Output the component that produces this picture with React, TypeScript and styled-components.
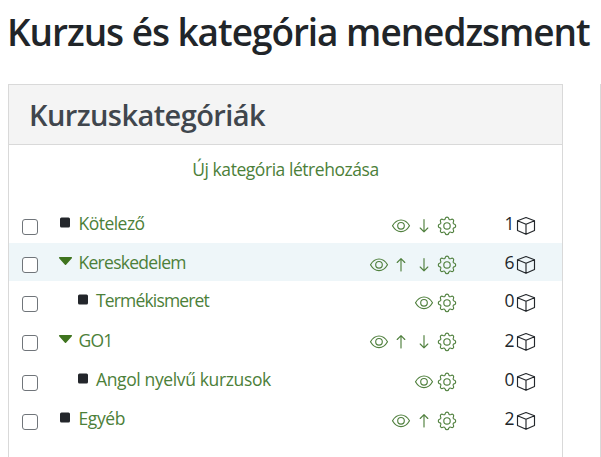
import React from 'react';
import styled, { createGlobalStyle } from 'styled-components';

const Global = createGlobalStyle`
  * { box-sizing: border-box; }
  html, body { margin: 0; background: #fff; overflow: hidden; }
  body { font-family: "Open Sans", "Noto Sans", sans-serif; font-size: 17.5px; font-weight: 400; color: #23272b; }
`;

const Page = styled.main`
  height: 457px;
  overflow: hidden;
`;

const Title = styled.h1`
  margin: 0;
  height: 84px;
  padding: 3px 0 0 7px;
  font-size: 37px;
  line-height: 58px;
  font-weight: 600;
  letter-spacing: -1.04px;
  color: #212529;
  white-space: nowrap;
`;

const Columns = styled.div`
  display: flex;
  gap: 37px;
  height: 373px;
  padding-left: 8px;
`;

const Panel = styled.section`
  flex: none;
  width: 555px;
  border: 1px solid #d9d9d9;
  border-bottom: 0;
`;

const PanelHeading = styled.h2`
  margin: 0;
  height: 60px;
  padding: 0 0 0 20px;
  background: #f4f4f4;
  border-bottom: 1px solid #d9d9d9;
  font-size: 29px;
  line-height: 60px;
  font-weight: 600;
  letter-spacing: -0.58px;
  color: #40464d;
`;

const CreateBar = styled.div`
  display: flex;
  justify-content: center;
  height: 59px;
  line-height: 49px;
`;

const Link = styled.a<{ $spacing: number }>`
  color: #4c8039;
  letter-spacing: ${(p) => p.$spacing}px;
  white-space: nowrap;
`;

const List = styled.ul`
  list-style: none;
  margin: 0;
  padding: 0;
`;

const Row = styled.li<{ $height: number; $active?: boolean }>`
  display: flex;
  align-items: flex-start;
  height: ${(p) => p.$height}px;
  padding-left: 13px;
  background: ${(p) => (p.$active ? '#eef6f9' : 'transparent')};
`;

const Check = styled.input<{ $top: number }>`
  appearance: none;
  flex: none;
  width: 16px;
  height: 16px;
  margin: ${(p) => p.$top}px 0 0;
  border: 1px solid #70757a;
  border-radius: 3px;
  background: #fff;
`;

const Marker = styled.span<{ $child?: boolean; $shift: number }>`
  flex: none;
  display: flex;
  width: ${(p) => (p.$child ? 58 : 40.5)}px;
  padding: ${(p) => 13 + p.$shift}px 0 0 ${(p) => (p.$child ? 37.5 : 20)}px;
`;

const Name = styled.span<{ $shift: number }>`
  flex: 1;
  padding-top: ${(p) => p.$shift}px;
  line-height: 39px;
`;

const Actions = styled.span`
  display: flex;
  gap: 2.8px;
  padding-top: 12px;
  color: #50803e;
`;

const Count = styled.span<{ $shift: number }>`
  display: flex;
  justify-content: flex-end;
  gap: 1.5px;
  width: 79px;
  margin-right: 26px;
  padding-top: ${(p) => p.$shift}px;
  line-height: 39px;
  svg { margin-top: ${(p) => 11.5 - p.$shift}px; }
`;

const NextPanel = styled.section`
  flex: none;
  width: 20px;
  border: 1px solid #d9d9d9;
`;

const Glyph = ({ children }: { children: React.ReactNode }) => (
  <svg width="20" height="20" viewBox="0 0 20 20" fill="none" stroke="currentColor" strokeWidth="1.15" strokeLinejoin="round" strokeLinecap="round">
    {children}
  </svg>
);

const icons = {
  eye: (
    <>
      <path d="M1.5 9.8C3.5 6.2 6.4 4 10 4S16.500 6.200 18.500 9.800C16.500 13.400 13.600 15.600 10 15.600S3.500 13.400 1.500 9.800Z" />
      <circle cx="10" cy="9.8" r="3.3" />
    </>
  ),
  up: <path d="M10 16V3.700M6.200 7.500L10 3.700 13.800 7.500" />,
  down: <path d="M10 3.500V15.800M6.200 12L10 15.800 13.800 12" />,
  gear: (
    <>
      <path d="M8.300 2.300Q8.600 1.100 10 1.100T11.700 2.300C12 3.800 12.800 4.100 14 3.500Q15.300 2.800 16.200 3.700T16.400 5.900C15.800 7.100 16.100 7.900 17.500 8.200Q18.700 8.500 18.700 9.900T17.500 11.600C16.100 11.900 15.800 12.700 16.400 13.900Q17.100 15.200 16.200 16.100T14 16.300C12.800 15.700 12 16.100 11.700 17.500Q11.400 18.700 10 18.700T8.300 17.500C8 16.100 7.200 15.700 6 16.300Q4.700 17 3.800 16.100T3.600 13.900C4.200 12.700 3.900 11.900 2.500 11.600Q1.300 11.300 1.300 9.900T2.500 8.200C3.900 7.900 4.200 7.100 3.600 5.900Q2.900 4.600 3.800 3.700T6 3.500C7.200 4.100 8 3.800 8.300 2.300Z" />
      <circle cx="10" cy="9.9" r="3.2" />
    </>
  ),
};

type Action = keyof typeof icons;

interface Category {
  name: string;
  spacing: number;
  count: number;
  height: number;
  checkTop?: number;
  shift?: number;
  child?: boolean;
  open?: boolean;
  active?: boolean;
  actions: Action[];
}

const categories: Category[] = [
  { name: 'Kötelező', spacing: -0.52, count: 1, height: 39, actions: ['eye', 'down', 'gear'] },
  { name: 'Kereskedelem', spacing: -0.72, count: 6, height: 38, checkTop: 14, open: true, active: true, actions: ['eye', 'up', 'down', 'gear'] },
  { name: 'Termékismeret', spacing: -0.84, count: 0, height: 39, child: true, actions: ['eye', 'gear'] },
  { name: 'GO1', spacing: -0.75, count: 2, height: 40, shift: 1, open: true, actions: ['eye', 'up', 'down', 'gear'] },
  { name: 'Angol nyelvű kurzusok', spacing: -0.37, count: 0, height: 39, child: true, actions: ['eye', 'gear'] },
  { name: 'Egyéb', spacing: -0.4, count: 2, height: 39, actions: ['eye', 'up', 'gear'] },
];

export default function App() {
  return (
    <Page>
      <Global />
      <Title>Kurzus és kategória menedzsment</Title>
      <Columns>
        <Panel>
          <PanelHeading>Kurzuskategóriák</PanelHeading>
          <CreateBar>
            <Link $spacing={-0.45}>Új kategória létrehozása</Link>
          </CreateBar>
          <List>
            {categories.map((c) => (
              <Row key={c.name} $height={c.height} $active={c.active}>
                <Check type="checkbox" $top={c.checkTop ?? 15} aria-label={c.name} />
                <Marker $child={c.child} $shift={c.shift ?? 0}>
                  {c.open ? (
                    <svg width="15" height="11" viewBox="0 0 15 11">
                      <path d="M1.7 1.7h11.600L7.500 8.300Z" fill="#3f741f" stroke="#3f741f" strokeWidth="1.5" strokeLinejoin="round" />
                    </svg>
                  ) : (
                    <svg width="13" height="12" viewBox="0 0 13 12">
                      <rect x="2" y="0.5" width="10" height="10" rx="1.5" fill="#23262b" />
                    </svg>
                  )}
                </Marker>
                <Name $shift={c.shift ?? 0}>
                  <Link $spacing={c.spacing}>{c.name}</Link>
                </Name>
                <Actions>
                  {c.actions.map((a) => (
                    <Glyph key={a}>{icons[a]}</Glyph>
                  ))}
                </Actions>
                <Count $shift={c.shift ?? 0}>
                  {c.count}
                  <Glyph>
                    <path d="M10 1.500L18.500 4.700V14.500L10 18.300 1.500 14.500V4.700ZM1.500 4.700L10 8.300 18.500 4.700M10 8.300V18.300" />
                  </Glyph>
                </Count>
              </Row>
            ))}
          </List>
        </Panel>
        <NextPanel />
      </Columns>
    </Page>
  );
}
